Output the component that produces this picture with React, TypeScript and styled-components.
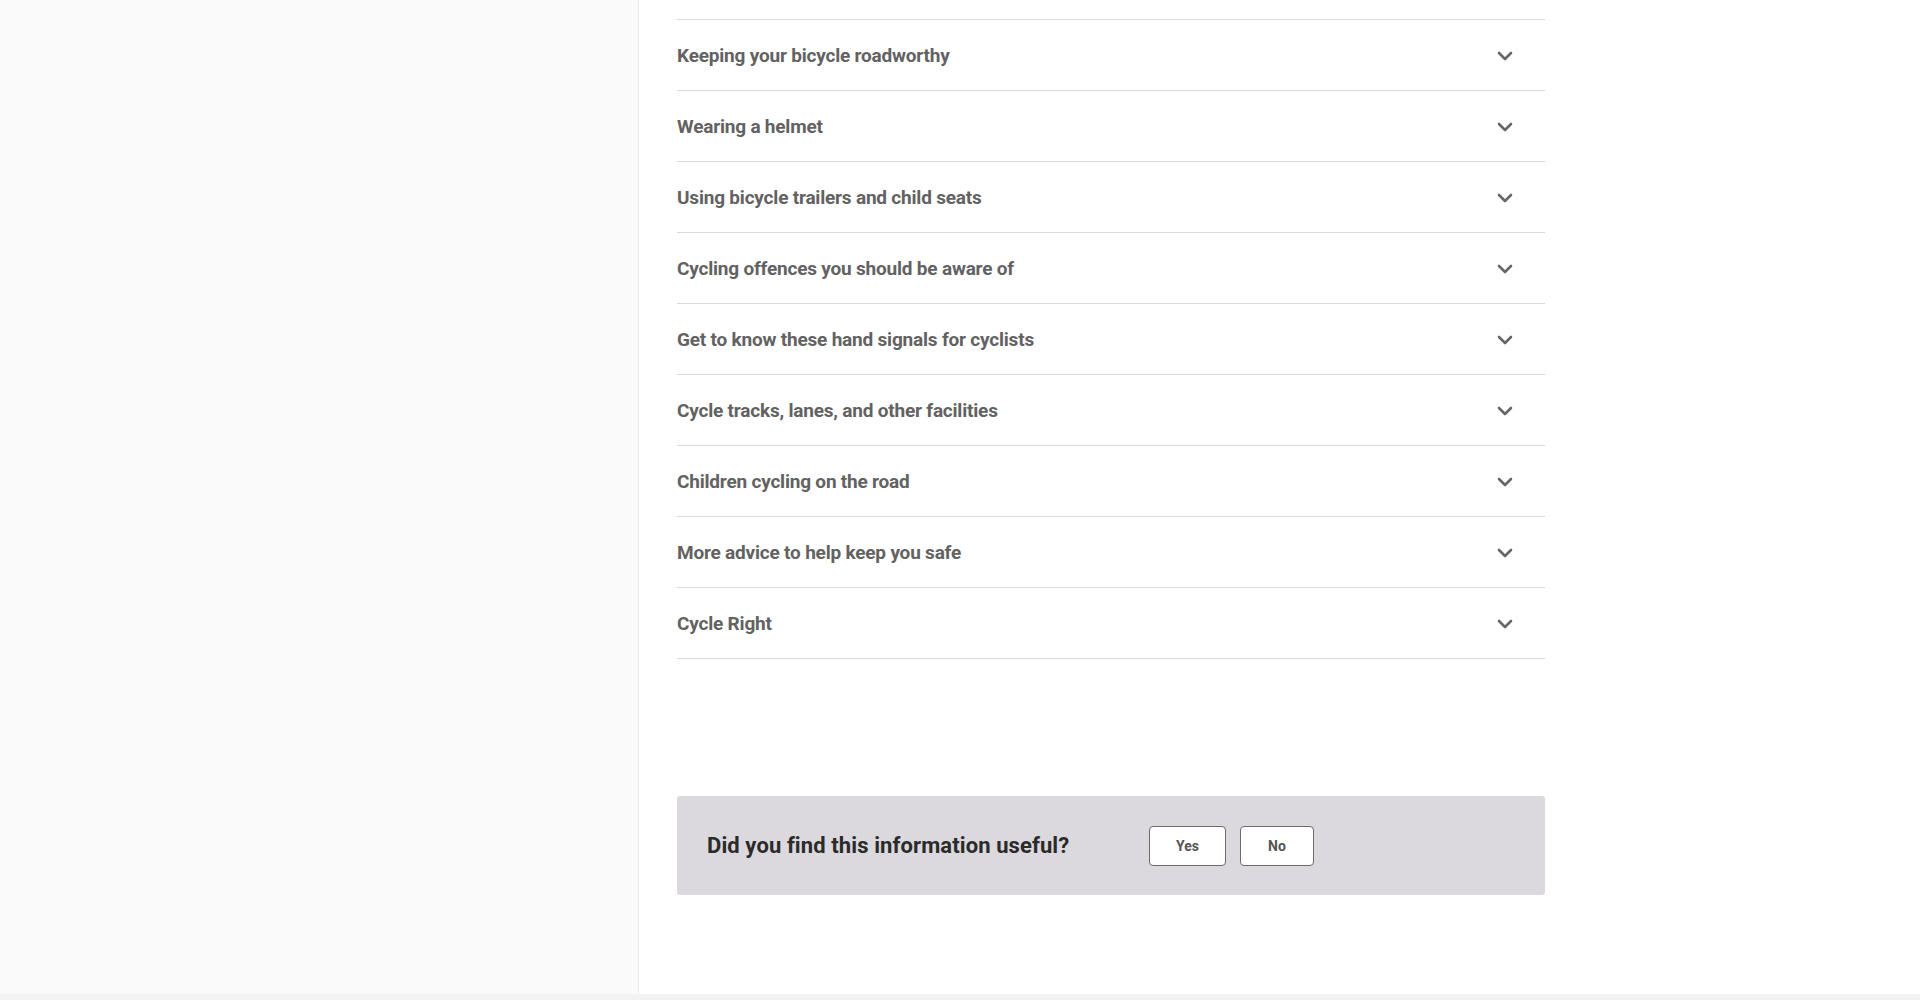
import styled, { createGlobalStyle } from "styled-components";

const GlobalStyle = createGlobalStyle`
  body {
    margin: 0;
    font-family: Roboto, "Liberation Sans", sans-serif;
    background: #ffffff;
  }
`;

const Pagina = styled.div`
  display: flex;
  flex-direction: column;
  min-height: 1000px;
`;

const Corpo = styled.div`
  display: flex;
  height: 994px;
`;

const BarraLateral = styled.aside`
  width: 638px;
  flex-shrink: 0;
  background: #fafafa;
  border-right: 1px solid #ececec;
`;

const Conteudo = styled.main`
  flex: 1;
  padding-left: 38px;
`;

const Coluna = styled.div`
  width: 868px;
`;

const Lista = styled.ul`
  list-style: none;
  margin: 19px 0 0;
  padding: 0;
  border-top: 1px solid #d9d9d9;
`;

const Item = styled.li`
  height: 70px;
  border-bottom: 1px solid #d9d9d9;
  display: flex;
  align-items: center;
  justify-content: space-between;
  cursor: pointer;
`;

const Titulo = styled.span`
  font-weight: 700;
  font-size: 19px;
  letter-spacing: -0.2px;
  color: #626262;
`;

const Seta = styled.svg`
  margin-right: 32px;
  margin-top: 2px;
`;

const Feedback = styled.section`
  margin-top: 137px;
  height: 99px;
  background: #dbd9dd;
  border-radius: 3px;
  display: flex;
  align-items: center;
  padding: 0 30px;
`;

const Pergunta = styled.h3`
  margin: 0;
  width: 442px;
  flex-shrink: 0;
  font-size: 22px;
  font-weight: 700;
  letter-spacing: 0.1px;
  color: #2b2b2b;
`;

const Botoes = styled.div`
  display: flex;
  gap: 14px;
`;

const Botao = styled.button<{ $largura: number }>`
  width: ${(p) => p.$largura}px;
  height: 40px;
  background: #ffffff;
  border: 1px solid #6b6b6b;
  border-radius: 4px;
  font-family: Roboto, "Liberation Sans", sans-serif;
  font-weight: 700;
  font-size: 14px;
  color: #555555;
  cursor: pointer;
`;

const Rodape = styled.footer`
  height: 6px;
  background: #f2f2f2;
`;

const topicos = [
  "Keeping your bicycle roadworthy",
  "Wearing a helmet",
  "Using bicycle trailers and child seats",
  "Cycling offences you should be aware of",
  "Get to know these hand signals for cyclists",
  "Cycle tracks, lanes, and other facilities",
  "Children cycling on the road",
  "More advice to help keep you safe",
  "Cycle Right",
];

function Chevron() {
  return (
    <Seta width="16" height="10" viewBox="0 0 16 10" fill="none">
      <path d="M2 2 L8 8 L14 2" stroke="#666666" strokeWidth="2.6" strokeLinecap="round" strokeLinejoin="round" />
    </Seta>
  );
}

export default function App() {
  return (
    <Pagina>
      <GlobalStyle />
      <Corpo>
        <BarraLateral />
        <Conteudo>
          <Coluna>
            <Lista>
              {topicos.map((t) => (
                <Item key={t}>
                  <Titulo>{t}</Titulo>
                  <Chevron />
                </Item>
              ))}
            </Lista>
            <Feedback>
              <Pergunta>Did you find this information useful?</Pergunta>
              <Botoes>
                <Botao $largura={77}>Yes</Botao>
                <Botao $largura={74}>No</Botao>
              </Botoes>
            </Feedback>
          </Coluna>
        </Conteudo>
      </Corpo>
      <Rodape />
    </Pagina>
  );
}
